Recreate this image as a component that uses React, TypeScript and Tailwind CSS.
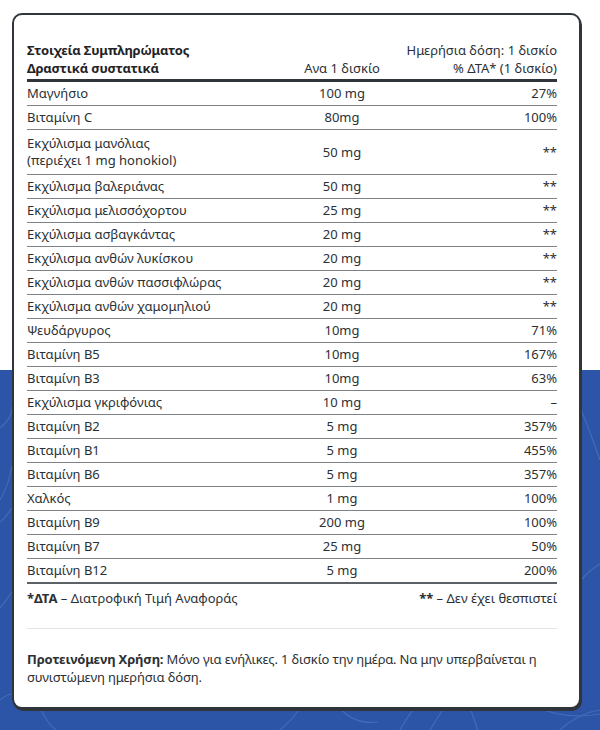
import React from "react";

interface Row {
  name: string;
  sub?: string;
  amount: string;
  dv: string;
}

const rows: Row[] = [
  { name: "Μαγνήσιο", amount: "100 mg", dv: "27%" },
  { name: "Βιταμίνη C", amount: "80mg", dv: "100%" },
  { name: "Εκχύλισμα μανόλιας", sub: "(περιέχει 1 mg honokiol)", amount: "50 mg", dv: "**" },
  { name: "Εκχύλισμα βαλεριάνας", amount: "50 mg", dv: "**" },
  { name: "Εκχύλισμα μελισσόχορτου", amount: "25 mg", dv: "**" },
  { name: "Εκχύλισμα ασβαγκάντας", amount: "20 mg", dv: "**" },
  { name: "Εκχύλισμα ανθών λυκίσκου", amount: "20 mg", dv: "**" },
  { name: "Εκχύλισμα ανθών πασσιφλώρας", amount: "20 mg", dv: "**" },
  { name: "Εκχύλισμα ανθών χαμομηλιού", amount: "20 mg", dv: "**" },
  { name: "Ψευδάργυρος", amount: "10mg", dv: "71%" },
  { name: "Βιταμίνη B5", amount: "10mg", dv: "167%" },
  { name: "Βιταμίνη B3", amount: "10mg", dv: "63%" },
  { name: "Εκχύλισμα γκριφόνιας", amount: "10 mg", dv: "–" },
  { name: "Βιταμίνη B2", amount: "5 mg", dv: "357%" },
  { name: "Βιταμίνη B1", amount: "5 mg", dv: "455%" },
  { name: "Βιταμίνη B6", amount: "5 mg", dv: "357%" },
  { name: "Χαλκός", amount: "1 mg", dv: "100%" },
  { name: "Βιταμίνη B9", amount: "200 mg", dv: "100%" },
  { name: "Βιταμίνη B7", amount: "25 mg", dv: "50%" },
  { name: "Βιταμίνη B12", amount: "5 mg", dv: "200%" },
];

function Waves() {
  return (
    <svg className="absolute left-0 top-[370px]" width="600" height="360" viewBox="0 0 600 360" fill="none">
      <g stroke="#4a70bd" strokeWidth="1.2" opacity="0.8">
        <path d="M0 58 C 10 50, 14 40, 12 30" />
        <path d="M0 130 C 6 120, 10 108, 12 96" />
        <path d="M0 152 C 5 148, 9 142, 12 138" />
        <path d="M0 238 C 5 232, 9 226, 12 222" />
        <path d="M581 40 C 590 60, 596 80, 600 90" />
        <path d="M581 210 C 590 200, 596 196, 600 194" />
        <path d="M0 330 C 14 318, 30 322, 40 338 C 46 350, 50 356, 56 360" />
        <path d="M280 360 C 290 352, 296 344, 300 338" />
        <path d="M340 338 C 350 350, 362 354, 378 352" />
        <path d="M400 360 C 404 352, 410 344, 414 338" />
        <path d="M430 360 C 436 350, 440 344, 444 338" />
        <path d="M470 338 C 474 348, 476 356, 478 360" />
        <path d="M540 338 C 556 346, 574 348, 600 344" />
        <path d="M560 360 C 570 350, 586 342, 600 340" />
      </g>
    </svg>
  );
}

export default function App() {
  return (
    <div
      className="relative w-[600px] h-[730px] overflow-hidden bg-white text-[13px] text-[#2b3034]"
      style={{ fontFamily: '"Noto Sans", "Open Sans", sans-serif' }}
    >
      <div className="absolute left-0 right-0 top-[370px] bottom-0 bg-[#2c55a7]" />
      <Waves />

      <div className="relative mt-[13px] ml-[12px] w-[569px] h-[696px] bg-white border-2 border-[#2f353a] rounded-[10px] shadow-[1px_2px_0_#2f353a] pl-[13px] pr-[22px] pt-[26px]">
        {/* header */}
        <div className="grid grid-cols-[260px_110px_1fr] leading-[18px] pb-[2px] border-b-[3px] border-[#2f353a]">
          <div className="font-bold text-[#1f2326] tracking-[-0.2px]">
            <div>Στοιχεία Συμπληρώματος</div>
            <div>Δραστικά συστατικά</div>
          </div>
          <div className="self-end text-center">Ανα 1 δισκίο</div>
          <div className="text-right">
            <div>Ημερήσια δόση: 1 δισκίο</div>
            <div>% ΔΤΑ* (1 δισκίο)</div>
          </div>
        </div>

        {/* rows */}
        <div>
          {rows.map((r, i) => (
            <div
              key={r.name}
              className={`grid grid-cols-[260px_110px_1fr] items-center leading-[17px] ${r.sub ? "py-[5px]" : "py-[3px]"} ${
                i === rows.length - 1 ? "border-b-2 border-[#5b6166]" : "border-b border-[#7d8287]"
              }`}
            >
              <div>
                <div>{r.name}</div>
                {r.sub && <div>{r.sub}</div>}
              </div>
              <div className="text-center">{r.amount}</div>
              <div className="text-right">{r.dv}</div>
            </div>
          ))}
        </div>

        {/* footnotes */}
        <div className="flex justify-between leading-[18px] pt-[5px] pb-[21px] border-b border-[#e3e5e8]">
          <div>
            <span className="font-bold">*ΔΤΑ</span> – Διατροφική Τιμή Αναφοράς
          </div>
          <div>
            <span className="font-bold">**</span> – Δεν έχει θεσπιστεί
          </div>
        </div>

        <p className="pt-[21px] leading-[18px] tracking-[-0.15px]">
          <span className="font-bold">Προτεινόμενη Χρήση:</span> Μόνο για ενήλικες. 1 δισκίο την ημέρα. Να μην υπερβαίνεται η
          συνιστώμενη ημερήσια δόση.
        </p>
      </div>
    </div>
  );
}
